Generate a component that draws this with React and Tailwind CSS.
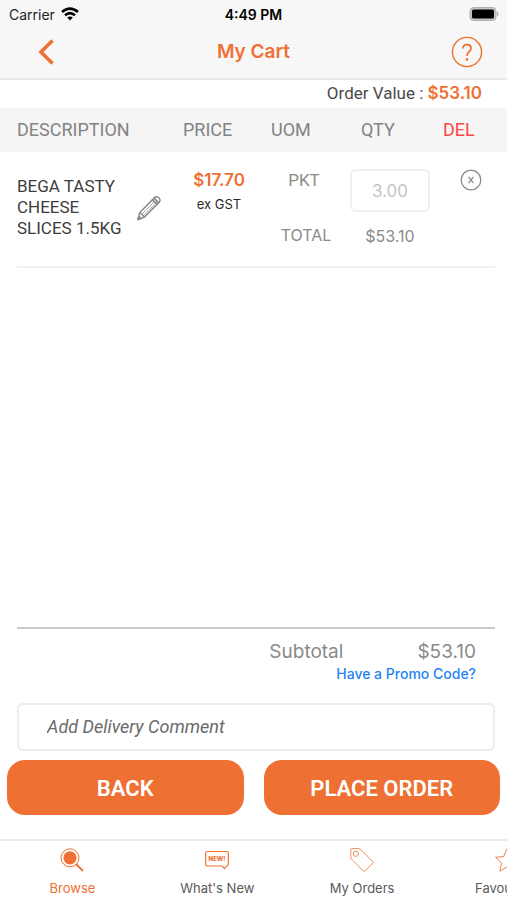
import { useState } from 'react';

const items = [
  { id: 1, name: 'BEGA TASTY CHEESE SLICES 1.5KG', price: '$17.70', uom: 'PKT', qty: '3.00', total: '$53.10' },
];

const StatusBar = () => (
  <div className="grid grid-cols-3 items-center h-7 px-2 text-[14px] text-black">
    <div className="flex items-center gap-1.5 pl-px">
      <span className="text-[#222]">Carrier</span>
      <svg width="18" height="14" viewBox="0 0 18 14" fill="none" stroke="#000" strokeWidth="2.5">
        <path d="M1 5 Q9 -1.8 17 5" />
        <path d="M4 8.3 Q9 4 14 8.3" />
        <path d="M9 13.5 L6.2 10.6 Q9 8.6 11.8 10.6 Z" fill="#000" stroke="none" />
      </svg>
    </div>
    <span className="text-center font-semibold">4:49 PM</span>
    <svg className="justify-self-end" width="30" height="14" viewBox="0 0 30 14">
      <rect x="1" y="0.5" width="26" height="13" rx="3.5" fill="#c4c4c4" stroke="#b0b0b0" />
      <rect x="3" y="2.5" width="22" height="9" rx="1.5" fill="#000" />
      <path d="M28 4.5 Q31 7 28 9.5 Z" fill="#aaa" />
    </svg>
  </div>
);

const Header = () => (
  <header className="bg-[#f7f7f7] border-b-2 border-[#e6e6e6]">
    <StatusBar />
    <div className="grid grid-cols-3 items-center h-[50px] pl-9 pr-6 pb-0.5">
      <button aria-label="Go back" className="justify-self-start p-0.5">
        <svg width="16" height="26" viewBox="0 0 16 26" fill="none" stroke="#ee7033" strokeWidth="3.6">
          <path d="M14.5 1.5 L3 13 L14.5 24.5" />
        </svg>
      </button>
      <h1 className="-ml-3 text-center text-[19px] font-semibold text-[#ee7033]">My Cart</h1>
      <button aria-label="Help" className="justify-self-end">
        <svg width="32" height="32" viewBox="0 0 32 32" fill="none" stroke="#ee7033">
          <circle cx="16" cy="16" r="14.6" strokeWidth="1.4" />
          <path d="M12 12.4 Q12 8.6 16 8.6 Q20 8.6 20 12.2 Q20 14.2 18 15.7 Q16 17.2 16 20" strokeWidth="1.7" />
          <circle cx="16" cy="23.4" r="1.3" fill="#ee7033" stroke="none" />
        </svg>
      </button>
    </div>
  </header>
);

const PencilIcon = () => (
  <svg width="26" height="26" viewBox="0 0 26 26" fill="none" stroke="#8b8b8b" strokeWidth="1.5" strokeLinejoin="round">
    <path d="M2 24.5 L3.8 17.5 L18.5 2.6 Q20.5 0.8 22.8 2.8 Q25 5 23.2 7.2 L8.6 22 Z" />
    <path d="M3.8 17.5 L8.6 22" />
    <path d="M16.5 4.8 L21.2 9.4 M18 3.2 L22.8 7.8" strokeWidth="1.8" />
    <path d="M6.2 18.8 L18 7 M8 20.4 L19.5 8.8" strokeWidth="0.8" />
    <path d="M2 24.5 L2.8 21.4 L5.2 23.6 Z" fill="#777" />
  </svg>
);

const CartItem = ({ item }) => {
  const [qty, setQty] = useState(item.qty);

  return (
    <>
      <tr className="align-top">
        <td rowSpan={2} className="pl-[17px] pt-6">
          <div className="flex items-center">
            <span className="w-[119px] text-[17px] leading-[21px] text-[#3c3c3c] font-['Roboto',sans-serif]">{item.name}</span>
            <button aria-label="Edit item">
              <PencilIcon />
            </button>
          </div>
        </td>
        <td rowSpan={2} className="pt-4 text-center">
          <div className="text-[17px] leading-6 font-semibold text-[#ee7033]">{item.price}</div>
          <div className="text-[13px] leading-6 text-[#2b2b2b]">ex GST</div>
        </td>
        <td className="pt-4 text-center text-[17px] text-[#8a8a8a] font-['Roboto',sans-serif]">{item.uom}</td>
        <td className="px-[5px] pt-[17px]">
          <input
            aria-label="Quantity"
            value={qty}
            onChange={(e) => setQty(e.target.value)}
            className="block w-full h-[43px] rounded-md border-2 border-[#f0f0f0] text-center text-[17px] text-[#c4c4c4]"
          />
        </td>
        <td className="pt-[17px]">
          <button aria-label="Delete item" className="block mx-auto">
            <svg width="22" height="22" viewBox="0 0 22 22" fill="none" stroke="#8a8a8a">
              <circle cx="11" cy="11" r="9.8" strokeWidth="1.3" />
              <path d="M8.6 7.8 L13.4 14.2 M13.4 7.8 L8.6 14.2" strokeWidth="1.2" />
            </svg>
          </button>
        </td>
      </tr>
      <tr className="h-[54px] align-top text-center text-[16px] text-[#8a8a8a]">
        <td className="pt-[11px] pl-1">TOTAL</td>
        <td className="pt-3">{item.total}</td>
        <td></td>
      </tr>
    </>
  );
};

const BrowseIcon = () => (
  <svg width="24" height="24" viewBox="0 0 24 24" fill="none" stroke="#ee7033">
    <circle cx="10" cy="9.8" r="9" strokeWidth="1" />
    <circle cx="10" cy="9.8" r="6.6" fill="#ee7033" stroke="none" />
    <path d="M16 16 L23 23" strokeWidth="1.8" />
  </svg>
);

const NewIcon = () => (
  <svg width="24" height="24" viewBox="0 0 24 24" fill="none" stroke="#ee7033" strokeWidth="1.2">
    <path d="M2.5 3.5 H21.5 Q23.3 3.5 23.3 5.3 V16.2 Q23.3 18 21.5 18 L19.5 20.6 L17.3 18 H2.5 Q0.7 18 0.7 16.2 V5.3 Q0.7 3.5 2.5 3.5 Z" />
    <text x="12" y="13" textAnchor="middle" fontSize="6" fontWeight="800" fill="#ee7033" stroke="none">NEW!</text>
  </svg>
);

const TagIcon = () => (
  <svg width="24" height="24" viewBox="0 0 24 24" fill="none" stroke="#ee7033" strokeWidth="0.8">
    <path d="M0.8 1.5 Q0.8 0.6 1.8 0.6 H8.6 Q9.8 0.6 10.6 1.4 L22.8 13.6 Q23.6 14.4 22.8 15.2 L15 23 Q14.2 23.8 13.4 23 L1.6 11.2 Q0.8 10.4 0.8 9.2 Z" />
    <circle cx="5.8" cy="5.8" r="2.6" />
  </svg>
);

const StarIcon = () => (
  <svg width="24" height="24" viewBox="0 0 24 24" fill="none" stroke="#ee7033" strokeWidth="0.9">
    <path d="M12 0.8 L15.4 8.6 L23.5 9.3 L17.4 14.8 L19.2 23.2 L12 18.9 L4.8 23.2 L6.6 14.8 L0.5 9.3 L8.6 8.6 Z" />
  </svg>
);

const tabs = [
  { label: 'Browse', Icon: BrowseIcon },
  { label: "What's New", Icon: NewIcon },
  { label: 'My Orders', Icon: TagIcon },
  { label: 'Favourites', Icon: StarIcon },
];

const TabBar = () => {
  const [active, setActive] = useState('Browse');

  return (
    <nav className="flex overflow-hidden border-t-2 border-[#eaeaea]">
      {tabs.map(({ label, Icon }) => (
        <button
          key={label}
          onClick={() => setActive(label)}
          className={`flex flex-col items-center w-2/7 shrink-0 gap-1.5 pt-[7px] pb-0.5 text-[13px] leading-5 ${
            active === label ? 'text-[#ee7033]' : 'text-[#5a5a5a]'
          }`}
        >
          <Icon />
          {label}
        </button>
      ))}
    </nav>
  );
};

const App = () => {
  return (
    <div className="flex flex-col min-h-screen bg-white font-['Inter',sans-serif]">
      <Header />

      <p className="h-7 pr-[25px] text-right text-[17px] leading-[26px] text-[#4a4a4a] font-['Roboto',sans-serif]">
        Order Value : <strong className="font-semibold text-[#ee7033] font-['Inter',sans-serif]">$53.10</strong>
      </p>

      <main className="flex-1">
        <table className="w-full table-fixed border-collapse">
          <colgroup>
            <col />
            <col className="w-[88px]" />
            <col className="w-[82px]" />
            <col className="w-[90px]" />
            <col className="w-[72px]" />
          </colgroup>
          <thead className="h-11 bg-[#f5f5f5] text-left text-[18px] text-[#838383] font-['Roboto',sans-serif]">
            <tr>
              <th className="pl-[17px] pb-0.5 font-normal">DESCRIPTION</th>
              <th className="pl-2 pb-0.5 font-normal">PRICE</th>
              <th className="pl-2 pb-0.5 font-normal">UOM</th>
              <th className="pl-4 pb-0.5 font-normal">QTY</th>
              <th className="pl-2 pb-0.5 font-normal text-[#f94848]">DEL</th>
            </tr>
          </thead>
          <tbody>
            {items.map((item) => (
              <CartItem key={item.id} item={item} />
            ))}
          </tbody>
        </table>
        <hr className="ml-[17px] mr-3 border-t-2 border-[#f2f2f2]" />
      </main>

      {/* Totals */}
      <section className="ml-[17px] mr-3 pt-[11px] pr-[19px] border-t-2 border-[#cacaca]">
        <div className="flex justify-end gap-[74px] text-[19px] leading-6 text-[#8a8a8a]">
          <span>Subtotal</span>
          <span>$53.10</span>
        </div>
        <div className="text-right leading-[18px]">
          <a href="#promo" className="text-[14px] font-medium text-[#2484f5]">Have a Promo Code?</a>
        </div>
      </section>

      <input
        aria-label="Add Delivery Comment"
        placeholder="Add Delivery Comment"
        className="h-12 mt-5 ml-[17px] mr-3 px-7 pb-0.5 rounded-md border-2 border-[#ededed] text-[18px] italic font-['Roboto',sans-serif] placeholder:text-[#6a6a6a]"
      />

      <div className="grid grid-cols-2 gap-5 px-[7px] pt-[9px] pb-6 text-[22px] font-semibold text-white font-['Roboto',sans-serif]">
        <button className="h-[55px] pt-0.5 rounded-[18px] bg-[#ee7033]">BACK</button>
        <button className="h-[55px] pt-0.5 rounded-[18px] bg-[#ee7033]">PLACE ORDER</button>
      </div>

      <TabBar />
    </div>
  );
};

export default App;
